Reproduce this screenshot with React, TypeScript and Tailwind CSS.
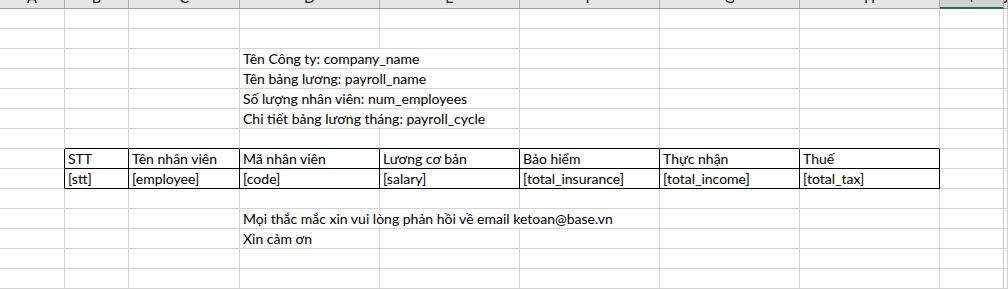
import type { ReactNode } from "react";

type Cell = {
  col: number;
  span?: number;
  text: string;
};

// column widths include the 1px right gridline
const COLUMN_LETTERS = ["A", "B", "C", "D", "E", "F", "G", "H", "I", "J"];
const SELECTED_COLUMN = 8;
const ROW_COUNT = 15;

const TABLE_HEADER_ROW = 7;
const TABLE_BODY_ROW = 8;
const TABLE_FIRST_COL = 1;
const TABLE_LAST_COL = 7;

const CELLS: Record<number, Cell[]> = {
  2: [{ col: 3, span: 2, text: "Tên Công ty: company_name" }],
  3: [{ col: 3, span: 2, text: "Tên bảng lương: payroll_name" }],
  4: [{ col: 3, span: 2, text: "Số lượng nhân viên: num_employees" }],
  5: [{ col: 3, span: 2, text: "Chi tiết bảng lương tháng: payroll_cycle" }],
  7: [
    { col: 1, text: "STT" },
    { col: 2, text: "Tên nhân viên" },
    { col: 3, text: "Mã nhân viên" },
    { col: 4, text: "Lương cơ bản" },
    { col: 5, text: "Bảo hiểm" },
    { col: 6, text: "Thực nhận" },
    { col: 7, text: "Thuế" },
  ],
  8: [
    { col: 1, text: "[stt]" },
    { col: 2, text: "[employee]" },
    { col: 3, text: "[code]" },
    { col: 4, text: "[salary]" },
    { col: 5, text: "[total_insurance]" },
    { col: 6, text: "[total_income]" },
    { col: 7, text: "[total_tax]" },
  ],
  10: [{ col: 3, span: 3, text: "Mọi thắc mắc xin vui lòng phản hồi về email ketoan@base.vn" }],
  11: [{ col: 3, text: "Xin cảm ơn" }],
};

const isTableRow = (row: number) => row === TABLE_HEADER_ROW || row === TABLE_BODY_ROW;
const inTableCols = (col: number) => col >= TABLE_FIRST_COL && col <= TABLE_LAST_COL;

function ColumnHeader({ letter, selected }: { letter: string; selected: boolean }) {
  return (
    <div
      className={
        selected
          ? "flex h-[9px] items-end justify-center overflow-hidden border-r border-b-2 border-r-[#ababab] border-b-[#217346] bg-[#d2d2d2] text-[#1e6b3d]"
          : "flex h-[9px] items-end justify-center overflow-hidden border-r border-b border-r-[#ababab] border-b-[#9e9e9e] bg-[#e6e6e6] text-[#262626]"
      }
    >
      <span className="mb-[3px] text-[14.5px] leading-[14px]">{letter}</span>
    </div>
  );
}

function GridCell({ row, col, span, children }: { row: number; col: number; span: number; children?: ReactNode }) {
  const lastCol = col + span - 1;
  const blackRight = isTableRow(row) && lastCol >= TABLE_FIRST_COL - 1 && lastCol <= TABLE_LAST_COL;
  const blackBottom = (isTableRow(row) || row === TABLE_HEADER_ROW - 1) && inTableCols(col);

  return (
    <div
      className={`flex h-5 min-w-0 items-end whitespace-nowrap border-r border-b pl-[3px] text-[14px] leading-[17px] text-black ${
        blackRight ? "border-r-black" : "border-r-[#d4d4d4]"
      } ${blackBottom ? "border-b-black" : "border-b-[#d4d4d4]"}`}
      style={{ gridColumn: `${col + 1} / span ${span}` }}
    >
      {children}
    </div>
  );
}

function SheetRow({ row }: { row: number }) {
  const cells = CELLS[row] ?? [];
  const out: ReactNode[] = [];
  let col = 0;
  while (col < COLUMN_LETTERS.length) {
    const cell = cells.find((c) => c.col === col);
    const span = cell?.span ?? 1;
    out.push(
      <GridCell key={col} row={row} col={col} span={span}>
        {cell ? <span className="pb-px">{cell.text}</span> : null}
      </GridCell>,
    );
    col += span;
  }
  return <>{out}</>;
}

export default function App() {
  const rows = Array.from({ length: ROW_COUNT }, (_, i) => i);

  return (
    <div
      className="h-[289px] w-[1008px] overflow-hidden bg-white"
      style={{ fontFamily: "Lato, 'Noto Sans', sans-serif" }}
    >
      <div className="grid grid-cols-[65px_64px_111px_140px_140px_140px_140px_140px_64px_4px]">
        {COLUMN_LETTERS.map((letter, i) => (
          <ColumnHeader key={letter} letter={letter} selected={i === SELECTED_COLUMN} />
        ))}
        {rows.map((row) => (
          <SheetRow key={row} row={row} />
        ))}
      </div>
    </div>
  );
}
